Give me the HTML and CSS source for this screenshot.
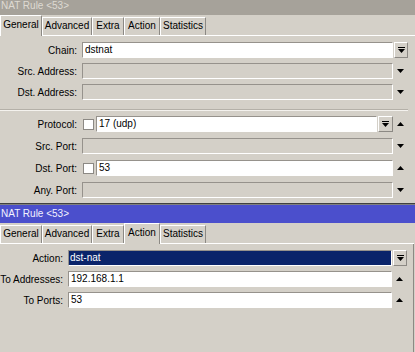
FILE: index.html
```html
<!DOCTYPE html>
<html lang="en">
<head>
  <meta charset="UTF-8">
  <title>NAT Rule &lt;53&gt;</title>
  <link rel="stylesheet" href="styles.css">
</head>
<body>
  <div class="window window-top">
    <div class="title">NAT Rule &lt;53&gt;</div>
    <div class="tabs">
      <div class="tab tab-general on">General</div>
      <div class="tab tab-advanced">Advanced</div>
      <div class="tab tab-extra">Extra</div>
      <div class="tab tab-action">Action</div>
      <div class="tab tab-stats">Statistics</div>
    </div>
    <div class="panel">
      <div class="row">
        <label>Chain:</label>
        <div class="field"><div class="input">dstnat</div></div>
        <div class="side"><div class="drop"><svg width="7" height="7"><rect x="0" y="0" width="7" height="1"/><polygon points="0,2 7,2 3.5,6"/></svg></div></div>
      </div>
      <div class="row">
        <label>Src. Address:</label>
        <div class="field"><div class="input off"></div></div>
        <div class="side"><svg class="arrow" width="7" height="4"><polygon points="0,0 7,0 3.5,4"/></svg></div>
      </div>
      <div class="row">
        <label>Dst. Address:</label>
        <div class="field"><div class="input off"></div></div>
        <div class="side"><svg class="arrow" width="7" height="4"><polygon points="0,0 7,0 3.5,4"/></svg></div>
      </div>

      <div class="sep"></div>

      <div class="group">
        <div class="row">
          <label>Protocol:</label>
          <div class="field">
            <span class="check"></span>
            <div class="input">17 (udp)</div>
            <div class="drop"><svg width="7" height="7"><rect x="0" y="0" width="7" height="1"/><polygon points="0,2 7,2 3.5,6"/></svg></div>
          </div>
          <div class="side"><svg class="arrow" width="7" height="4"><polygon points="0,4 7,4 3.5,0"/></svg></div>
        </div>
        <div class="row">
          <label>Src. Port:</label>
          <div class="field"><div class="input off"></div></div>
          <div class="side"><svg class="arrow" width="7" height="4"><polygon points="0,0 7,0 3.5,4"/></svg></div>
        </div>
        <div class="row">
          <label>Dst. Port:</label>
          <div class="field">
            <span class="check"></span>
            <div class="input">53</div>
          </div>
          <div class="side"><svg class="arrow" width="7" height="4"><polygon points="0,4 7,4 3.5,0"/></svg></div>
        </div>
        <div class="row">
          <label>Any. Port:</label>
          <div class="field"><div class="input off"></div></div>
          <div class="side"><svg class="arrow" width="7" height="4"><polygon points="0,0 7,0 3.5,4"/></svg></div>
        </div>
      </div>
    </div>
  </div>

  <div class="window window-bottom">
    <div class="title active">NAT Rule &lt;53&gt;</div>
    <div class="tabs">
      <div class="tab tab-general">General</div>
      <div class="tab tab-advanced">Advanced</div>
      <div class="tab tab-extra">Extra</div>
      <div class="tab tab-action on">Action</div>
      <div class="tab tab-stats">Statistics</div>
    </div>
    <div class="panel">
      <div class="row">
        <label>Action:</label>
        <div class="field"><div class="input picked"><span>dst-nat</span></div></div>
        <div class="side"><div class="drop"><svg width="7" height="7"><rect x="0" y="0" width="7" height="1"/><polygon points="0,2 7,2 3.5,6"/></svg></div></div>
      </div>
      <div class="row">
        <label>To Addresses:</label>
        <div class="field"><div class="input">192.168.1.1</div></div>
        <div class="side"><svg class="arrow" width="7" height="4"><polygon points="0,4 7,4 3.5,0"/></svg></div>
      </div>
      <div class="row">
        <label>To Ports:</label>
        <div class="field"><div class="input">53</div></div>
        <div class="side"><svg class="arrow" width="7" height="4"><polygon points="0,4 7,4 3.5,0"/></svg></div>
      </div>
    </div>
  </div>
</body>
</html>
```

FILE: styles.css
```css
body {
  margin: 0;
  width: 415px;
  height: 352px;
  overflow: hidden;
  background: #d4d0c8;
  font-family: 'Liberation Sans', Arial, sans-serif;
  font-size: 10px;
  color: #000;
}
.window {
  display: flow-root;
  background: #d4d0c8;
}
.window-top {
  height: 203px;
  overflow: hidden;
  border-bottom: 1px solid #404040;
  box-shadow: 0 1px 0 #808080;
  margin-bottom: 1px;
}
.title {
  height: 18px;
  line-height: 18px;
  padding-left: 1px;
  background: #a6a29a;
  color: #dedad2;
  white-space: nowrap;
}
.window-top .title {
  margin-top: -3px;
}
.title.active {
  background: #4b4fcc;
  color: #f2f2ff;
}
.tabs {
  display: flex;
  align-items: flex-end;
  height: 20px;
  border-bottom: 1px solid #fff;
}
.tab {
  box-sizing: border-box;
  height: 18px;
  line-height: 16px;
  text-align: center;
  border-top: 1px solid #fff;
  border-left: 1px solid #fff;
  border-right: 1px solid #8c8984;
  white-space: nowrap;
}
.tab.on {
  height: 21px;
  line-height: 18px;
  margin-bottom: -1px;
  background: #d4d0c8;
}
.tab-general { width: 42px; }
.tab-advanced { width: 50px; }
.tab-extra { width: 32px; }
.tab-action { width: 36px; }
.tab-stats { width: 46px; }

.panel {
  display: flex;
  flex-direction: column;
  gap: 5px;
  padding-top: 6px;
}
.group {
  display: flex;
  flex-direction: column;
  gap: 6px;
}
.row {
  display: flex;
  align-items: center;
  height: 16px;
}
.row label {
  box-sizing: border-box;
  width: 82px;
  padding-right: 5px;
  text-align: right;
  white-space: nowrap;
}
.field {
  display: flex;
  align-items: center;
  width: 311px;
  height: 16px;
}
.side {
  display: flex;
  align-items: center;
  justify-content: center;
  width: 15px;
  height: 16px;
}
.input {
  box-sizing: border-box;
  flex: 1;
  height: 16px;
  line-height: 14px;
  padding-left: 2px;
  background: #fff;
  border: 1px solid;
  border-color: #96928c #fff #fff #96928c;
  white-space: nowrap;
  overflow: hidden;
}
.input.off {
  background: #d4d0c8;
}
.input.picked {
  background: #0a246a;
  color: #fff;
  padding-left: 1px;
}
.check {
  box-sizing: border-box;
  width: 11px;
  height: 11px;
  margin: 0 2px 0 1px;
  background: #fff;
  border: 1px solid #8c8984;
}
.drop {
  box-sizing: border-box;
  display: flex;
  align-items: center;
  justify-content: center;
  width: 15px;
  height: 16px;
  margin-left: 1px;
  border: 1px solid;
  border-color: #fff #8c8984 #8c8984 #fff;
  background: #d4d0c8;
}
.side .drop {
  width: 14px;
  margin-left: 1px;
}
.drop svg,
.arrow {
  fill: #000;
  display: block;
}
.sep {
  height: 0;
  margin: 4px 7px 0 0;
  border-top: 1px solid #b4b0a8;
  border-bottom: 1px solid #f4f2ee;
}

.window-bottom .tabs {
  width: 414px;
}
.window-bottom .panel {
  height: 108px;
  width: 414px;
  box-sizing: border-box;
  border-right: 1px solid #8c8984;
}
.window-bottom .row label {
  width: 68px;
}
.window-bottom .field {
  width: 324px;
}
```
